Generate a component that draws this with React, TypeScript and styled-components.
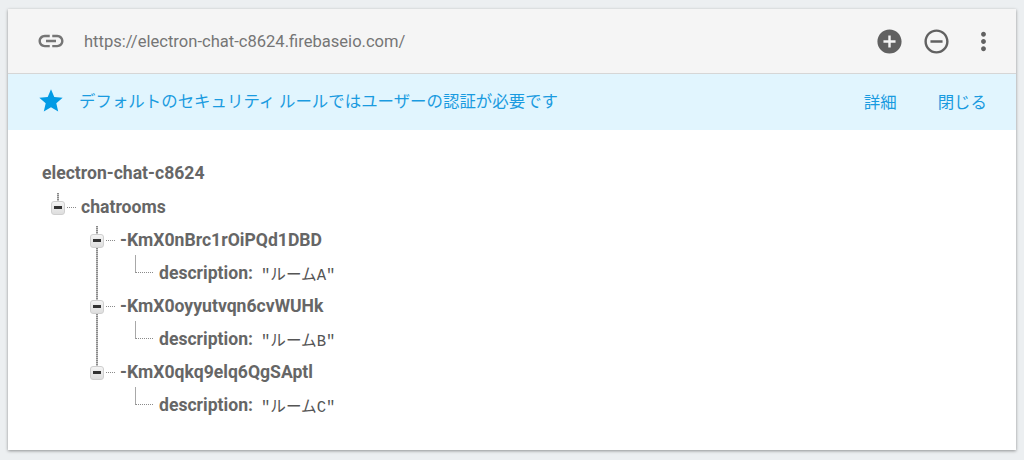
import React from "react";
import styled, { createGlobalStyle } from "styled-components";

const GlobalStyle = createGlobalStyle`
  html, body {
    margin: 0;
    padding: 0;
    background: #eceff1;
  }
  body {
    font-family: Roboto, "Noto Sans CJK JP", sans-serif;
  }
`;

const ICONS: Record<string, string> = {
  link: "M3.9 12c0-1.71 1.39-3.1 3.1-3.1h4V7H7c-2.76 0-5 2.24-5 5s2.24 5 5 5h4v-1.9H7c-1.71 0-3.1-1.39-3.1-3.1zM8 13h8v-2H8v2zm9-6h-4v1.9h4c1.71 0 3.1 1.39 3.1 3.1s-1.39 3.1-3.1 3.1h-4V17h4c2.76 0 5-2.24 5-5s-2.24-5-5-5z",
  star: "M12 17.27L18.18 21l-1.64-7.03L22 9.24l-7.19-.61L12 2 9.19 8.63 2 9.24l5.46 4.73L5.82 21z",
  add: "M12 2C6.48 2 2 6.48 2 12s4.48 10 10 10 10-4.48 10-10S17.52 2 12 2zm5 11h-4v4h-2v-4H7v-2h4V7h2v4h4v2z",
  remove: "M7 11v2h10v-2H7zm5-9C6.48 2 2 6.48 2 12s4.48 10 10 10 10-4.48 10-10S17.52 2 12 2zm0 18c-4.41 0-8-3.59-8-8s3.59-8 8-8 8 3.59 8 8-3.59 8-8 8z",
  more: "M12 8c1.1 0 2-.9 2-2s-.9-2-2-2-2 .9-2 2 .9 2 2 2zm0 2c-1.1 0-2 .9-2 2s.9 2 2 2 2-.9 2-2-.9-2-2-2zm0 6c-1.1 0-2 .9-2 2s.9 2 2 2 2-.9 2-2-.9-2-2-2z",
};

function Icon(props: { name: string; size: number; color: string }) {
  return (
    <svg width={props.size} height={props.size} viewBox="0 0 24 24" fill={props.color}>
      <path d={ICONS[props.name]} />
    </svg>
  );
}

const rooms = [
  { key: "-KmX0nBrc1rOiPQd1DBD", value: "ルームA" },
  { key: "-KmX0oyyutvqn6cvWUHk", value: "ルームB" },
  { key: "-KmX0qkq9elq6QgSAptl", value: "ルームC" },
];

export default function App() {
  return (
    <>
      <GlobalStyle />
      <Page>
        <Card>
          <Header>
            <LinkSlot>
              <Icon name="link" size={30} color="#757575" />
            </LinkSlot>
            <Url>https://electron-chat-c8624.firebaseio.com/</Url>
            <Actions>
              <Icon name="add" size={29} color="#616161" />
              <Icon name="remove" size={29} color="#616161" />
              <Icon name="more" size={29} color="#616161" />
            </Actions>
          </Header>
          <Banner>
            <Icon name="star" size={28} color="#039be5" />
            <BannerText>デフォルトのセキュリティ ルールではユーザーの認証が必要です</BannerText>
            <BannerLink>詳細</BannerLink>
            <BannerLink>閉じる</BannerLink>
          </Banner>
          <Tree>
            <RootName>electron-chat-c8624</RootName>
            <Row $level={0}>
              <Toggle />
              <Dash />
              <Key>chatrooms</Key>
            </Row>
            {rooms.map((room, i) => (
              <React.Fragment key={room.key}>
                <Row $level={1}>
                  <Toggle $tail={i < rooms.length - 1} />
                  <Dash />
                  <Key>{room.key}</Key>
                </Row>
                <Row $level={2}>
                  <Elbow />
                  <Key>description:</Key>
                  <Value>"{room.value}"</Value>
                </Row>
              </React.Fragment>
            ))}
          </Tree>
        </Card>
      </Page>
    </>
  );
}

const Page = styled.div`
  width: 1024px;
  height: 460px;
  padding: 9px 8px 10px;
  box-sizing: border-box;
  overflow: hidden;
`;

const Card = styled.div`
  height: 441px;
  background: #fff;
  box-shadow: 0 1px 3px rgba(0, 0, 0, 0.4);
  display: flex;
  flex-direction: column;
`;

const Header = styled.div`
  height: 64px;
  flex: none;
  display: flex;
  align-items: center;
  padding: 0 18px 0 28px;
  background: #f5f5f5;
  border-bottom: 1px solid #d6d6d6;
`;

const LinkSlot = styled.div`
  display: flex;
  margin-right: 18px;
`;

const Url = styled.div`
  flex: 1;
  font-size: 16.57px;
  color: #757575;
`;

const Actions = styled.div`
  display: flex;
  gap: 18px;
`;

const Banner = styled.div`
  height: 56px;
  flex: none;
  display: flex;
  align-items: center;
  padding: 0 29px 2px 29px;
  box-sizing: border-box;
  background: #e1f5fe;
`;

const BannerText = styled.div`
  flex: 1;
  margin-left: 14px;
  margin-bottom: 2px;
  font-family: "Noto Sans CJK JP", sans-serif;
  font-weight: 400;
  font-size: 16.45px;
  color: #1a9be0;
`;

const BannerLink = styled.div`
  margin-left: 41px;
  font-family: "Noto Sans CJK JP", sans-serif;
  font-weight: 400;
  font-size: 16.45px;
  color: #1a9be0;
`;

const Tree = styled.div`
  padding: 27px 0 0 34px;
  display: flex;
  flex-direction: column;
  isolation: isolate;
`;

const RootName = styled.div`
  height: 33px;
  line-height: 33px;
  font-size: 17.6px;
  font-weight: 700;
  color: #666;
`;

const Row = styled.div<{ $level: number }>`
  height: 33px;
  display: flex;
  align-items: center;
  padding-left: ${(p) => 9 + p.$level * 39}px;
`;

const Toggle = styled.div<{ $tail?: boolean }>`
  position: relative;
  width: 14px;
  height: 14px;
  margin-top: 2px;
  box-sizing: border-box;
  border: 1px solid #cfcfcf;
  border-radius: 3px;
  background: linear-gradient(#f4f4f4, #dedede);
  flex: none;

  /* minus bar */
  &::before {
    content: "";
    position: absolute;
    left: 2px;
    top: 4px;
    width: 8px;
    height: 3px;
    background: #333;
  }

  /* dotted stem above, running on to the next sibling when there is one */
  &::after {
    content: "";
    position: absolute;
    z-index: -1;
    left: 5px;
    top: -9px;
    bottom: ${(p) => (p.$tail ? "-52px" : "0")};
    width: 2px;
    background: repeating-linear-gradient(#8a8a8a 0 1px, #c4c4c4 1px 2px);
  }
`;

const Dash = styled.div`
  flex: none;
  width: 9px;
  margin: 2px 5px 0 2px;
  border-top: 1px dotted #8a8a8a;
`;

const Elbow = styled.div`
  flex: none;
  width: 18px;
  height: 18px;
  margin: -1px 6px 0 6px;
  box-sizing: border-box;
  align-self: flex-start;
  border-left: 1px solid #a8a8a8;
  border-bottom: 1px dotted #8a8a8a;
`;

const Key = styled.div`
  font-size: 17.6px;
  font-weight: 700;
  color: #666;
`;

const Value = styled.div`
  margin-left: 8px;
  margin-top: 1px;
  font-family: "Liberation Mono", "Noto Sans CJK JP", monospace;
  font-size: 15.6px;
  color: #555;
`;
